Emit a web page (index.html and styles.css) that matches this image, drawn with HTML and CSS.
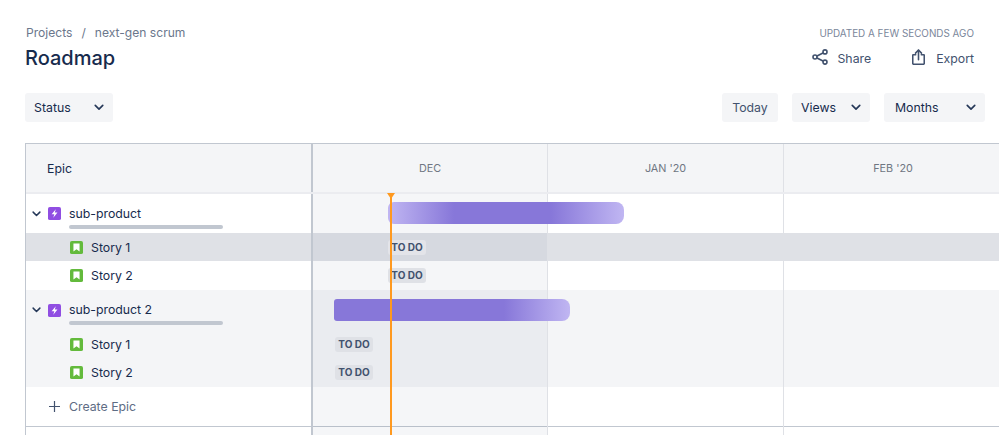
FILE: index.html
```html
<!DOCTYPE html>
<html lang="en">
<head>
<meta charset="utf-8">
<title>Roadmap</title>
<link rel="stylesheet" href="styles.css">
</head>
<body>
<svg class="defs" width="0" height="0" aria-hidden="true">
  <symbol id="chev" viewBox="0 0 12 8"><path d="M1.500 1.500 6 6l4.500-4.500" fill="none" stroke="currentColor" stroke-width="2" stroke-linecap="round" stroke-linejoin="round"/></symbol>
  <symbol id="epic" viewBox="0 0 14 14"><rect width="14" height="14" rx="2" fill="#904ee2"/><path d="M8.400 2.300 3.900 7.900h2.900L5.700 11.700l4.500-5.700H7.300z" fill="#fff"/></symbol>
  <symbol id="story" viewBox="0 0 14 14"><rect width="14" height="14" rx="2" fill="#63ba3c"/><path d="M3.700 2.800h6.600v8.500L7 9 3.700 11.300z" fill="#fff"/></symbol>
</svg>
<header class="head">
  <div class="head-left">
    <nav class="crumbs"><span>Projects</span><span>/</span><span>next-gen scrum</span></nav>
    <h1 class="title">Roadmap</h1>
  </div>
  <div class="head-right">
    <div class="updated">UPDATED A FEW SECONDS AGO</div>
    <div class="actions">
      <a class="action">
        <svg class="ic-share" width="16" height="16" viewBox="0 0 16 16"><g fill="none" stroke="#42526e" stroke-width="1.600"><line x1="3" y1="8" x2="13" y2="3"/><line x1="3" y1="8" x2="13" y2="13"/><circle cx="3" cy="8" r="2" fill="#fff"/><circle cx="13" cy="2.900" r="2" fill="#fff"/><circle cx="13" cy="13.100" r="2" fill="#fff"/></g></svg>
        <span>Share</span>
      </a>
      <a class="action">
        <svg class="ic-export" width="13" height="16" viewBox="0 0 14 17"><g fill="none" stroke="#42526e" stroke-width="1.700" stroke-linecap="round" stroke-linejoin="round"><path d="M4 6H1.500a.7.7 0 0 0-.7.7v8.600c0 .6.4 1 1 1h10.400c.6 0 1-.4 1-1V6.700a.7.7 0 0 0-.7-.7H10"/><path d="M7 11.500V1.300"/><path d="M3.800 4.300 7 1l3.200 3.300"/></g></svg>
        <span>Export</span>
      </a>
    </div>
  </div>
</header>
<div class="toolbar">
  <button class="btn w-status"><span>Status</span><svg class="chev"><use href="#chev"/></svg></button>
  <div class="tools-right">
    <button class="btn w-today muted"><span>Today</span></button>
    <button class="btn w-views"><span>Views</span><svg class="chev"><use href="#chev"/></svg></button>
    <button class="btn w-months"><span>Months</span><svg class="chev"><use href="#chev"/></svg></button>
  </div>
</div>
<section class="roadmap">
  <div class="row row-head">
    <div class="side head-cell">Epic</div>
    <div class="months">
      <div class="month m-dec">DEC</div>
      <div class="month m-jan">JAN '20</div>
      <div class="month m-feb">FEB '20</div>
    </div>
  </div>
  <div class="body">
    <div class="row epic">
      <div class="side"><svg class="chev small"><use href="#chev"/></svg><svg class="type"><use href="#epic"/></svg><div class="epic-name">sub-product<i class="progress"></i></div></div>
      <div class="lane"><div class="bar bar-a"></div></div>
    </div>
    <div class="row story hl story-a">
      <div class="side"><svg class="type"><use href="#story"/></svg><span>Story 1</span></div>
      <div class="lane"><span class="loz loz-a">TO DO</span></div>
    </div>
    <div class="row story story-b">
      <div class="side"><svg class="type"><use href="#story"/></svg><span>Story 2</span></div>
      <div class="lane"><span class="loz loz-a">TO DO</span></div>
    </div>
    <div class="row epic alt">
      <div class="side"><svg class="chev small"><use href="#chev"/></svg><svg class="type"><use href="#epic"/></svg><div class="epic-name">sub-product 2<i class="progress"></i></div></div>
      <div class="lane"><div class="bar bar-b"></div></div>
    </div>
    <div class="row story alt story-a">
      <div class="side"><svg class="type"><use href="#story"/></svg><span>Story 1</span></div>
      <div class="lane"><span class="loz loz-b">TO DO</span></div>
    </div>
    <div class="row story alt story-b">
      <div class="side"><svg class="type"><use href="#story"/></svg><span>Story 2</span></div>
      <div class="lane"><span class="loz loz-b">TO DO</span></div>
    </div>
    <div class="row create">
      <div class="side"><svg class="plus" width="11" height="11" viewBox="0 0 11 11"><path d="M5.500 0v11M0 5.500h11" stroke="#42526e" stroke-width="1.200" fill="none"/></svg><span>Create Epic</span></div>
      <div class="lane"></div>
    </div>
    <div class="row tail"><div class="side"></div><div class="lane"></div></div>
    <div class="columns"><div class="col col-dec"></div><div class="col col-jan"></div></div>
    <div class="today"></div>
  </div>
</section>
</body>
</html>
```

FILE: styles.css
```css
* { box-sizing: border-box; }
html, body { margin: 0; height: 435px; overflow: hidden; background: #fff; }
body { font-family: Inter, "Liberation Sans", sans-serif; font-size: 12.300px; color: #172b4d; width: 999px; }
.defs { position: absolute; }

.head { display: flex; justify-content: space-between; padding: 25px 25px 0 25px; height: 93px; }
.crumbs { display: flex; gap: 9px; padding-left: 1px; color: #6b778c; font-size: 12.100px; line-height: 16px; height: 16px; }
.title { margin: 5px 0 0; font-size: 20px; font-weight: 500; line-height: 24px; color: #172b4d; }
.head-right { display: flex; flex-direction: column; align-items: flex-end; }
.updated { font-size: 9.900px; line-height: 14px; color: #7a869a; margin-top: 1px; }
.actions { display: flex; gap: 41px; margin-top: 9px; }
.action { display: flex; align-items: center; gap: 9px; color: #42526e; height: 16px; }
.action span { padding-top: 2px; }
.action:last-child { gap: 11px; }

.toolbar { display: flex; justify-content: space-between; padding: 0 14px 0 25px; height: 50px; }
.tools-right { display: flex; gap: 14px; }
.btn { display: flex; align-items: center; justify-content: space-between; height: 29px; padding: 0 9px; border: 0; border-radius: 3px; background: #f4f5f7; font: inherit; color: #172b4d; }
.btn.muted { color: #42526e; justify-content: center; }
.w-status { width: 88px; }
.w-today { width: 56px; }
.w-views { width: 78px; }
.w-months { width: 101px; padding-left: 11px; }
.chev { width: 10px; height: 7px; color: #253858; }
.chev.small { width: 9px; height: 6px; margin-right: 7px; }

.roadmap { margin-left: 25px; width: 974px; border-top: 1px solid #c1c7d0; border-left: 1px solid #c1c7d0; }
.row { display: flex; }
.side { flex: 0 0 287px; display: flex; align-items: center; border-right: 2px solid #c1c7d0; }
.lane { flex: 1; position: relative; z-index: 1; }

.row-head { height: 50px; background: #f4f5f7; border-bottom: 2px solid #ebecf0; }
.head-cell { padding-left: 21px; }
.months { flex: 1; display: flex; }
.month { display: flex; align-items: center; justify-content: center; font-size: 10.800px; color: #6f7682; border-right: 1px solid #dfe1e6; }
.m-dec { flex: 0 0 235px; }
.m-jan { flex: 0 0 236px; }
.m-feb { flex: 0 0 218px; border-right: 0; }

.body { position: relative; }
.epic { height: 39px; }
.epic.alt { height: 40px; }
.epic .side { padding-left: 6px; }
.type { width: 13px; height: 13px; }
.epic .type { margin-right: 8px; }
.epic-name { position: relative; line-height: 16px; }
.progress { position: absolute; left: 0; top: 19px; width: 154px; height: 4px; border-radius: 2px; background: #c1c7d0; }
.story .side { padding-left: 44px; padding-bottom: 1px; }
.story .type { margin-right: 8px; }
.story-a { height: 29px; }
.story-b { height: 28px; }
.alt { background: #f4f5f7; }
.hl { background: linear-gradient(#dfe1e6 28px, #fff 28px); }
.create { height: 40px; border-bottom: 1px solid #c1c7d0; color: #5e6c84; }
.create .side { padding-left: 23px; }
.plus { margin-right: 9px; }
.tail { height: 8px; }

.columns { position: absolute; top: 0; bottom: 0; left: 287px; display: flex; pointer-events: none; }
.col { border-right: 1px solid #dfe1e6; }
.col-dec { width: 235px; background: rgba(9, 30, 66, 0.04); }
.col-jan { width: 236px; }

.today { position: absolute; z-index: 2; top: -1px; bottom: 0; left: 364px; width: 2px; background: #ff991f; }
.today::before { content: ""; position: absolute; left: -3px; top: 0; border: 4px solid transparent; border-top: 6px solid #ff991f; border-bottom: 0; }

.bar { position: absolute; height: 22px; width: 236px; }
.bar-a { top: 8px; left: 75px; border-radius: 6px 8px 8px 6px; background: linear-gradient(90deg, #c0b6f2 0%, #8777d9 28%, #8777d9 69%, #c0b6f2 100%); }
.bar-b { top: 9px; left: 21px; border-radius: 3px 8px 8px 3px; background: linear-gradient(90deg, #8777d9 0%, #8777d9 72%, #c0b6f2 100%); }

.loz { position: absolute; top: 6px; display: flex; justify-content: center; width: 38px; height: 15px; border-radius: 3px; background: #dfe1e6; color: #42526e; font-size: 10px; font-weight: 700; line-height: 15px; }
.story-a .loz { top: 7px; }
.hl .loz { background: #e3e4e9; }
.loz-a { left: 75px; }
.loz-b { left: 22px; }
```
